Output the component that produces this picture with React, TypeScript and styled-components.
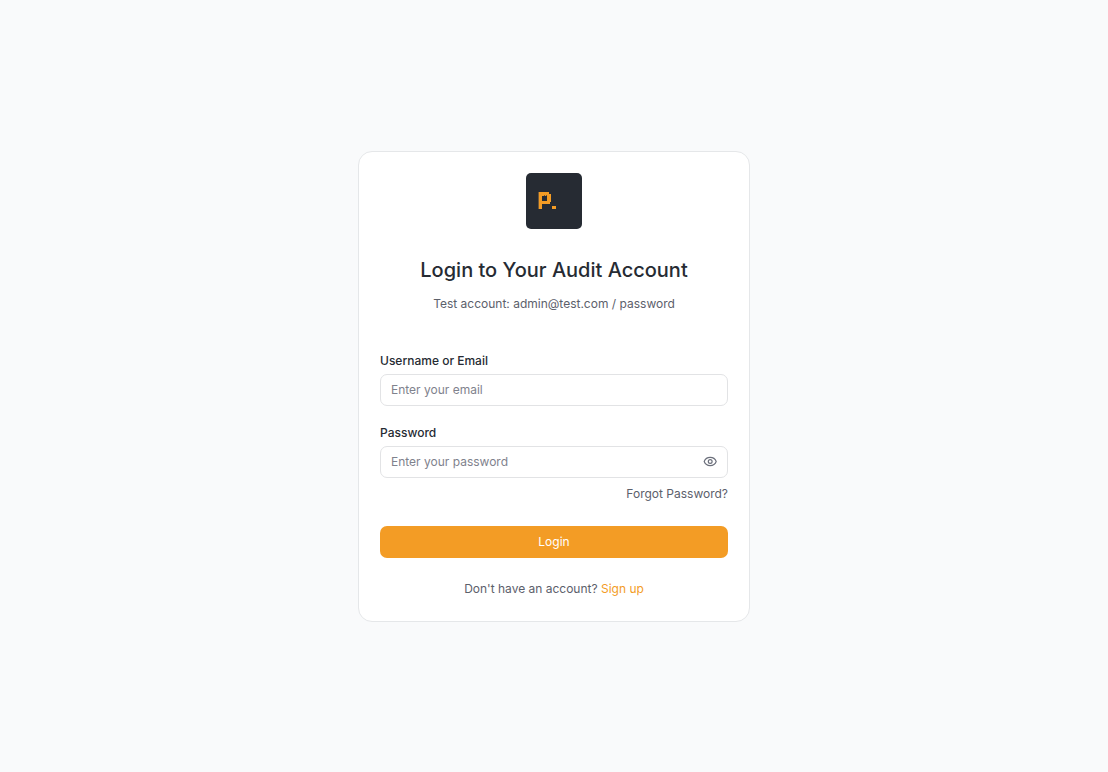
import React, { useState } from "react";
import styled, { createGlobalStyle } from "styled-components";

const GlobalStyle = createGlobalStyle`
  *, *::before, *::after { box-sizing: border-box; }
  body {
    margin: 0;
    background: #f9fafb;
    color: #262b33;
    font-family: Inter, "Liberation Sans", sans-serif;
    font-size: 12px;
    line-height: 18px;
  }
  button, input { font: inherit; }
`;

const Page = styled.main`
  min-height: 100vh;
  display: flex;
  align-items: center;
  justify-content: center;
`;

const Card = styled.section`
  width: 100%;
  max-width: 392px;
  padding: 21px 21px 23px;
  border: 1px solid #e5e7e9;
  border-radius: 14px;
  background: #fff;
`;

const Header = styled.header`
  display: flex;
  flex-direction: column;
  align-items: center;
  text-align: center;
`;

const Logo = styled.svg`
  width: 56px;
  height: 56px;
`;

const Title = styled.h1`
  margin: 27px 0 11px;
  font-size: 20px;
  line-height: 28px;
  font-weight: 500;
`;

const Muted = styled.p`
  margin: 0;
  color: #5c606b;
  text-align: center;
`;

const Form = styled.form`
  margin: 39px 0 22px;
  display: flex;
  flex-direction: column;
`;

const Field = styled.div`
  display: flex;
  flex-direction: column;
  gap: 4px;
  & + & { margin-top: 18px; }
`;

const Label = styled.label`
  font-weight: 500;
`;

const InputBox = styled.div`
  display: flex;
  align-items: center;
  height: 32px;
  padding: 0 10px;
  border: 1px solid #e2e3e5;
  border-radius: 7px;
  background: #fff;
  &:focus-within { border-color: #f39c25; }
`;

const Input = styled.input`
  flex: 1;
  min-width: 0;
  padding: 0;
  border: 0;
  outline: 0;
  background: transparent;
  color: inherit;
  &::placeholder { color: #7f828d; opacity: 1; }
`;

const EyeButton = styled.button`
  display: flex;
  padding: 0;
  border: 0;
  background: none;
  color: #6b6f7b;
  cursor: pointer;
`;

const Link = styled.a<{ $accent?: boolean }>`
  color: ${(p) => (p.$accent ? "#f39c25" : "#5c606b")};
  text-decoration: none;
  &:hover { text-decoration: underline; }
`;

const Forgot = styled.div`
  margin-top: 7px;
  text-align: right;
`;

const Submit = styled.button`
  height: 32px;
  margin-top: 23px;
  padding: 0;
  border: 0;
  border-radius: 7px;
  background: #f39c25;
  color: #fff;
  cursor: pointer;
`;

export default function App() {
  const [visible, setVisible] = useState(false);
  return (
    <>
      <GlobalStyle />
      <Page>
        <Card>
          <Header>
            <Logo viewBox="0 0 56 56" role="img" aria-label="Logo">
              <rect width="56" height="56" rx="5" fill="#262b33" />
              <g shapeRendering="crispEdges">
                <rect x="12" y="19" width="1" height="17" fill="#70583a" />
                <rect x="13" y="19" width="3" height="17" fill="#f39c25" />
                <rect x="16" y="19" width="7" height="4" fill="#f39c25" />
                <rect x="22" y="21" width="3" height="8" fill="#f39c25" />
                <rect x="21" y="22" width="1" height="8" fill="#f39c25" />
                <rect x="16" y="28" width="8" height="3" fill="#f39c25" />
                <rect x="26" y="33" width="4" height="3" fill="#f39c25" />
                <rect x="18" y="22" width="1" height="1" fill="#70583a" />
                <rect x="20" y="22" width="1" height="1" fill="#70583a" />
              </g>
            </Logo>
            <Title>Login to Your Audit Account</Title>
            <Muted>Test account: admin@test.com / password</Muted>
          </Header>
          <Form onSubmit={(e) => e.preventDefault()}>
            <Field>
              <Label htmlFor="email">Username or Email</Label>
              <InputBox>
                <Input id="email" type="text" placeholder="Enter your email" />
              </InputBox>
            </Field>
            <Field>
              <Label htmlFor="password">Password</Label>
              <InputBox>
                <Input
                  id="password"
                  type={visible ? "text" : "password"}
                  placeholder="Enter your password"
                />
                <EyeButton
                  type="button"
                  aria-label="Toggle password visibility"
                  onClick={() => setVisible(!visible)}
                >
                  <svg width="14" height="14" viewBox="0 0 14 14" fill="none" stroke="currentColor" strokeWidth="1.2">
                    <path d="M1.2 6.5C2.2 3.9 4.4 2.4 7.2 2.4S12.2 3.9 13.2 6.5C12.2 9.1 10 10.6 7.2 10.6S2.2 9.1 1.2 6.5Z" strokeLinejoin="round" />
                    <circle cx="7.2" cy="6.5" r="1.9" />
                  </svg>
                </EyeButton>
              </InputBox>
            </Field>
            <Forgot>
              <Link href="#forgot">Forgot Password?</Link>
            </Forgot>
            <Submit type="submit">Login</Submit>
          </Form>
          <Muted>
            Don't have an account? <Link $accent href="#signup">Sign up</Link>
          </Muted>
        </Card>
      </Page>
    </>
  );
}
